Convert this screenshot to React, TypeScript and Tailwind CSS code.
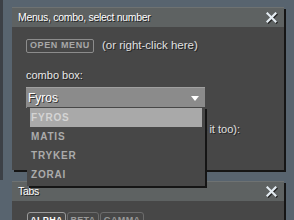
const font = { fontFamily: '"Liberation Sans", "DejaVu Sans", sans-serif' }

const CloseX = () => (
  <svg width="11" height="11" viewBox="0 0 11 11" className="drop-shadow-[1px_1px_0_#222]">
    <path d="M1.5 1.5 L9.5 9.5 M9.5 1.5 L1.5 9.5" stroke="#e4ecf2" strokeWidth="2.2" strokeLinecap="square" />
  </svg>
)

const TitleBar = ({ title }: { title: string }) => (
  <div className="h-[20px] bg-[#5e6262] border-t border-[#6e7272] flex items-center justify-between pl-[6px] pr-[7px]">
    <span className="text-[10.5px] tracking-[-0.3px] text-white [text-shadow:1px_1px_0_#222]">{title}</span>
    <CloseX />
  </div>
)

const Tab = ({ label, w, active }: { label: string; w: string; active?: boolean }) => (
  <div
    className={`${w} h-[16px] overflow-hidden whitespace-nowrap text-center border rounded-t-[3px] text-[9px] font-bold tracking-[0.3px] leading-[14px] ${
      active ? 'border-[#9a9a9a] text-white' : 'border-[#6c6c6c] text-[#9a9a9a]'
    }`}
  >
    {label}
  </div>
)

export default function App() {
  const races = ['FYROS', 'MATIS', 'TRYKER', 'ZORAI']
  return (
    <div style={font} className="relative w-[294px] h-[220px] overflow-hidden bg-[#58646f] pl-[12px] pt-[7px]">
      <div className="absolute left-0 top-0 w-[3px] h-[180px] bg-[#3c4046]" />

      {/* window 1 */}
      <div className="w-[272px] h-[163px] bg-[#474747] shadow-[2px_2px_0_#151515]">
        <TitleBar title="Menus, combo, select number" />
        <div className="px-[14px]">
          <div className="flex items-center gap-[8px] mt-[10px]">
            <button className="h-[14px] px-[3px] border border-[#8c8c8c] rounded-[2px] text-[9px] font-bold leading-none text-[#a8a8a8] tracking-[0.6px]">
              OPEN MENU
            </button>
            <span className="text-[11.5px] text-[#e0e0e0] [text-shadow:1px_1px_0_#222]">(or right-click here)</span>
          </div>
          <div className="mt-[15px] text-[11px] leading-[13px] text-[#e8e8e8] [text-shadow:1px_1px_0_#222]">combo box:</div>
          <div className="mt-[5px] w-[179px] h-[21px] bg-[#8b8b8b] border-t border-[#a0a0a0] flex items-center justify-between pl-[2px] pr-[6px]">
            <span className="text-[12px] text-white [text-shadow:1px_1px_0_#333]">Fyros</span>
            <svg width="8" height="5" viewBox="0 0 8 5">
              <path d="M0 0 H8 L4 5 Z" fill="#ffffff" />
            </svg>
          </div>
          <div className="mt-[15px] w-[214px] whitespace-nowrap text-right text-[11px] leading-[13px] text-[#e0e0e0] [text-shadow:1px_1px_0_#222]">
            select number (type it too):
          </div>
        </div>
      </div>

      {/* window 2 */}
      <div className="mt-[11px] w-[272px] h-[60px] bg-[#474747] shadow-[2px_2px_0_#151515]">
        <TitleBar title="Tabs" />
        <div className="px-[15px] pt-[11px] flex gap-[1px]">
          <Tab label="ALPHA" w="w-[39px]" active />
          <Tab label="BETA" w="w-[32px]" />
          <Tab label="GAMMA" w="w-[44px]" />
        </div>
      </div>

      {/* open dropdown */}
      <div className="absolute left-[27px] top-[107px] w-[178px] h-[79px] bg-[#474747] shadow-[2px_2px_0_#151515] pt-[1px] px-[3px]">
        {races.map((r, i) => (
          <div
            key={r}
            className={`h-[19px] flex items-center pl-[1px] text-[10px] font-bold tracking-[0.8px] ${
              i === 0 ? 'bg-[#a9a9a9] text-[#d4d4d4]' : 'text-[#ababab]'
            }`}
          >
            {r}
          </div>
        ))}
      </div>
    </div>
  )
}
